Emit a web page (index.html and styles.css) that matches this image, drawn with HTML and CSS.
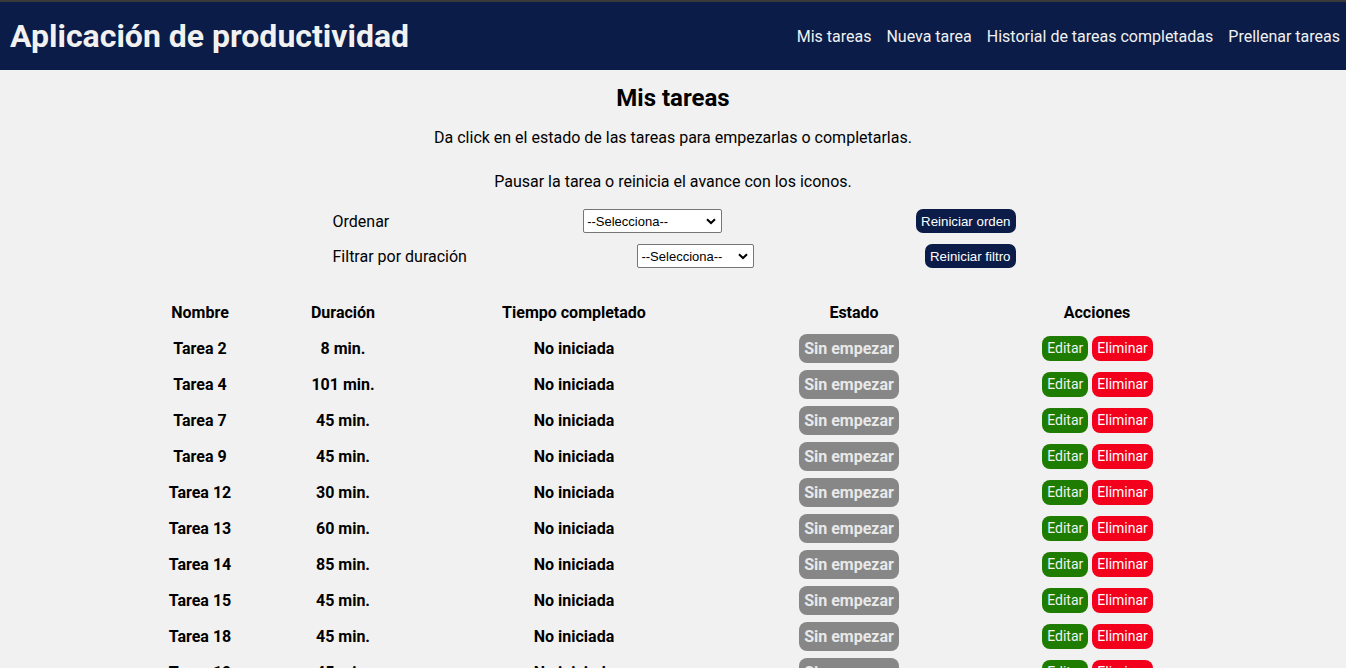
FILE: index.html
```html
<!DOCTYPE html>
<html lang="es">
<head>
<meta charset="utf-8">
<title>Aplicación de productividad</title>
<link rel="stylesheet" href="styles.css">
</head>
<body>
<header class="topbar">
  <h1 class="brand">Aplicación de productividad</h1>
  <nav class="nav">
    <a href="#">Mis tareas</a>
    <a href="#">Nueva tarea</a>
    <a href="#">Historial de tareas completadas</a>
    <a href="#">Prellenar tareas</a>
  </nav>
</header>
<main class="main">
  <h2 class="title">Mis tareas</h2>
  <p class="intro first">Da click en el estado de las tareas para empezarlas o completarlas.</p>
  <p class="intro">Pausar la tarea o reinicia el avance con los iconos.</p>
  <div class="controls">
    <div class="control-row">
      <span class="label">Ordenar</span>
      <select class="sel sel-order"><option>--Selecciona--</option></select>
      <button class="btn-dark">Reiniciar orden</button>
    </div>
    <div class="control-row">
      <span class="label">Filtrar por duración</span>
      <select class="sel sel-filter"><option>--Selecciona--</option></select>
      <button class="btn-dark">Reiniciar filtro</button>
    </div>
  </div>
  <div class="table">
    <div class="row head">
      <div>Nombre</div><div>Duración</div><div>Tiempo completado</div><div>Estado</div><div>Acciones</div>
    </div>
    <div class="row"><div>Tarea 2</div><div>8 min.</div><div>No iniciada</div><div><span class="state">Sin empezar</span></div><div class="acts"><span class="edit">Editar</span><span class="del">Eliminar</span></div></div>
    <div class="row"><div>Tarea 4</div><div>101 min.</div><div>No iniciada</div><div><span class="state">Sin empezar</span></div><div class="acts"><span class="edit">Editar</span><span class="del">Eliminar</span></div></div>
    <div class="row"><div>Tarea 7</div><div>45 min.</div><div>No iniciada</div><div><span class="state">Sin empezar</span></div><div class="acts"><span class="edit">Editar</span><span class="del">Eliminar</span></div></div>
    <div class="row"><div>Tarea 9</div><div>45 min.</div><div>No iniciada</div><div><span class="state">Sin empezar</span></div><div class="acts"><span class="edit">Editar</span><span class="del">Eliminar</span></div></div>
    <div class="row"><div>Tarea 12</div><div>30 min.</div><div>No iniciada</div><div><span class="state">Sin empezar</span></div><div class="acts"><span class="edit">Editar</span><span class="del">Eliminar</span></div></div>
    <div class="row"><div>Tarea 13</div><div>60 min.</div><div>No iniciada</div><div><span class="state">Sin empezar</span></div><div class="acts"><span class="edit">Editar</span><span class="del">Eliminar</span></div></div>
    <div class="row"><div>Tarea 14</div><div>85 min.</div><div>No iniciada</div><div><span class="state">Sin empezar</span></div><div class="acts"><span class="edit">Editar</span><span class="del">Eliminar</span></div></div>
    <div class="row"><div>Tarea 15</div><div>45 min.</div><div>No iniciada</div><div><span class="state">Sin empezar</span></div><div class="acts"><span class="edit">Editar</span><span class="del">Eliminar</span></div></div>
    <div class="row"><div>Tarea 18</div><div>45 min.</div><div>No iniciada</div><div><span class="state">Sin empezar</span></div><div class="acts"><span class="edit">Editar</span><span class="del">Eliminar</span></div></div>
    <div class="row"><div>Tarea 19</div><div>45 min.</div><div>No iniciada</div><div><span class="state">Sin empezar</span></div><div class="acts"><span class="edit">Editar</span><span class="del">Eliminar</span></div></div>
  </div>
</main>
</body>
</html>
```
FILE: styles.css
```css
html, body {
  margin: 0;
  padding: 0;
}
body {
  background: #f1f1f1;
  font-family: Roboto, "Liberation Sans", sans-serif;
  color: #000;
  overflow: hidden;
}
.topbar {
  height: 68px;
  border-top: 2px solid #3a3a3a;
  background: #0a1c47;
  display: flex;
  align-items: center;
  justify-content: space-between;
  padding: 0 6px 0 10px;
}
.brand {
  margin: 0;
  color: #f1f1f1;
  font-size: 32px;
  font-weight: 700;
}
.nav {
  display: flex;
  gap: 15px;
}
.nav a {
  color: #f1f1f1;
  text-decoration: none;
  font-size: 16px;
}
.main {
  text-align: center;
}
.title {
  margin: 0;
  padding-top: 14px;
  font-size: 24px;
  font-weight: 700;
  line-height: 28px;
}
.intro {
  font-size: 16px;
  line-height: 18px;
  margin: 0;
}
.intro.first {
  margin-top: 17px;
}
.intro + .intro {
  margin-top: 26px;
}
.controls {
  box-sizing: border-box;
  width: 685px;
  padding-left: 2px;
  margin: 18px auto 0;
  display: flex;
  flex-direction: column;
  gap: 11px;
}
.control-row {
  display: flex;
  justify-content: space-between;
  align-items: center;
  height: 24px;
}
.label {
  font-size: 16px;
}
.sel {
  appearance: none;
  -webkit-appearance: none;
  height: 24px;
  border: 1px solid #767676;
  border-radius: 2px;
  background-color: #fff;
  background-image: url("data:image/svg+xml;utf8,<svg xmlns='http://www.w3.org/2000/svg' width='10' height='7' viewBox='0 0 10 7'><path d='M1 1.2 L5 5 L9 1.2' fill='none' stroke='black' stroke-width='2'/></svg>");
  background-repeat: no-repeat;
  background-position: right 5px center;
  font-family: "Liberation Sans", Arial, sans-serif;
  font-size: 13px;
  color: #000;
  padding: 0 0 0 3px;
  text-align: left;
}
.sel-order {
  width: 139px;
}
.sel-filter {
  width: 117px;
}
.btn-dark {
  background: #0a1c47;
  color: #fff;
  border: none;
  border-radius: 7px;
  height: 24px;
  padding: 0 5px;
  font-family: "Liberation Sans", Arial, sans-serif;
  font-size: 13.3px;
}
.table {
  box-sizing: border-box;
  width: 1070px;
  padding-left: 2px;
  margin: 26px auto 0;
}
.row {
  display: grid;
  grid-template-columns: 120px 166px 296px 264px 222px;
  height: 36px;
  align-items: center;
  font-weight: 700;
  font-size: 16px;
}
.state {
  display: inline-block;
  background: #878787;
  color: #e9e9e9;
  font-size: 16px;
  font-weight: 700;
  border-radius: 8px;
  padding: 0 5px;
  margin-right: 10px;
  line-height: 29px;
  height: 29px;
}
.acts {
  display: flex;
  justify-content: center;
  gap: 4px;
  font-weight: 400;
  padding-left: 1px;
}
.edit, .del {
  display: inline-block;
  color: #fff;
  font-size: 14px;
  line-height: 25px;
  height: 25px;
  border-radius: 8px;
  padding: 0 5px;
}
.edit {
  background: #1e7d00;
  color: #f1f1f1;
}
.del {
  background: #f2001c;
}
```
